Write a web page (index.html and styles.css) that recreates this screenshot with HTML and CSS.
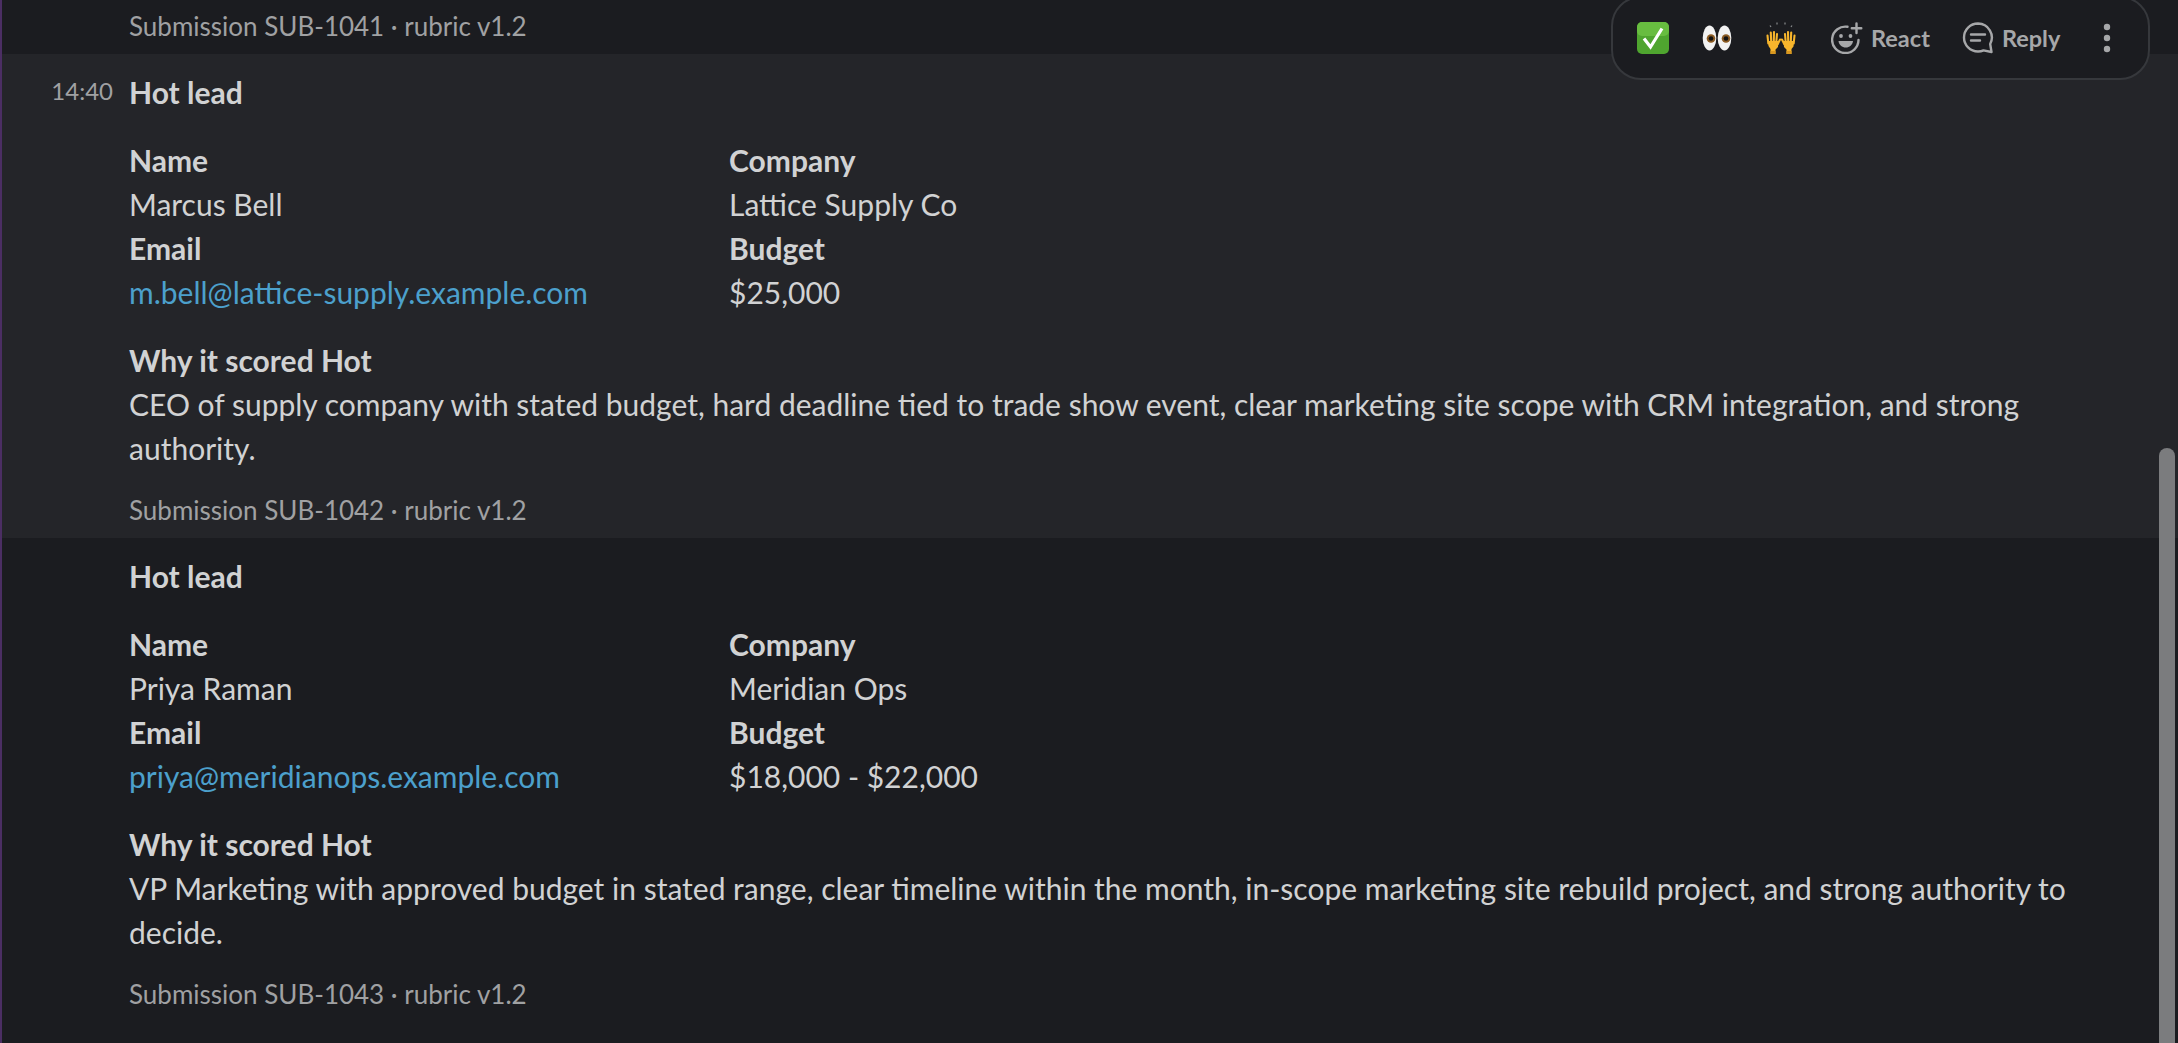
FILE: index.html
```html
<!DOCTYPE html>
<html lang="en">
<head>
  <meta charset="UTF-8">
  <title>Hot leads</title>
  <link rel="stylesheet" href="styles.css">
</head>
<body>
  <main class="channel">
    <p class="meta meta-top">Submission SUB-1041 · rubric v1.2</p>

    <article class="message hovered">
      <time class="stamp">14:40</time>
      <h3 class="title">Hot lead</h3>
      <div class="fields">
        <div><b>Name</b><span>Marcus Bell</span></div>
        <div><b>Company</b><span>Lattice Supply Co</span></div>
        <div><b>Email</b><a href="#">m.bell@lattice-supply.example.com</a></div>
        <div><b>Budget</b><span>$25,000</span></div>
      </div>
      <div class="why">
        <b>Why it scored Hot</b>
        <p>CEO of supply company with stated budget, hard deadline tied to trade show event, clear marketing site scope with CRM integration, and strong authority.</p>
      </div>
      <p class="meta">Submission SUB-1042 · rubric v1.2</p>
    </article>

    <article class="message">
      <h3 class="title">Hot lead</h3>
      <div class="fields">
        <div><b>Name</b><span>Priya Raman</span></div>
        <div><b>Company</b><span>Meridian Ops</span></div>
        <div><b>Email</b><a href="#">priya@meridianops.example.com</a></div>
        <div><b>Budget</b><span>$18,000 - $22,000</span></div>
      </div>
      <div class="why">
        <b>Why it scored Hot</b>
        <p>VP Marketing with approved budget in stated range, clear timeline within the month, in-scope marketing site rebuild project, and strong authority to decide.</p>
      </div>
      <p class="meta">Submission SUB-1043 · rubric v1.2</p>
    </article>
  </main>

  <div class="toolbar">
    <svg class="emoji" viewBox="0 0 32 32">
      <rect width="32" height="32" rx="5" fill="#4fa52f"/>
      <rect width="32" height="14" rx="5" fill="#68bd40"/>
      <path d="M7 16.500l6.500 8.500L25 6.500" fill="none" stroke="#fff" stroke-width="3.200"/>
    </svg>
    <svg class="emoji" viewBox="0 0 32 32">
      <ellipse cx="8.500" cy="16" rx="6.800" ry="12.500" fill="#f2f2f2"/>
      <ellipse cx="23.500" cy="16" rx="6.800" ry="12.500" fill="#f2f2f2"/>
      <circle cx="10" cy="16.500" r="4.300" fill="#8a5a22"/>
      <circle cx="25" cy="16.500" r="4.300" fill="#8a5a22"/>
      <circle cx="10" cy="16.500" r="2.300" fill="#111"/>
      <circle cx="25" cy="16.500" r="2.300" fill="#111"/>
    </svg>
    <svg class="emoji" viewBox="0 0 32 32">
      <g stroke="#f7b52c" stroke-width="2.100" stroke-linecap="round">
        <path d="M2.500 13.500l.8 8M5.800 10.500l.4 9M9 10l-.2 9M12 12l-.7 8M15 17.500l-2.200 4.500"/>
        <path d="M29.500 13.500l-.8 8M26.200 10.500l-.4 9M23 10l.2 9M20 12l.7 8M17 17.500l2.200 4.500"/>
      </g>
      <path d="M3 19h10.500l-.5 6-2.500 2.500v4.500H5.500v-5L3.500 24z" fill="#f7b52c"/>
      <path d="M29 19H18.500l.5 6 2.500 2.500v4.500h5v-5l2-2.500z" fill="#f7b52c"/>
      <path d="M5.500 29h5v3h-5zM21.500 29h5v3h-5z" fill="#d9971f"/>
      <path d="M5 3.500l1 1.500M12 .5v2M20 .5v2M27 3.500l-1 1.500" stroke="#8a8c8e" stroke-width="1.200" fill="none"/>
    </svg>
    <button class="action react">
      <svg viewBox="0 0 32 32" fill="none" stroke="currentColor" stroke-width="2.400" stroke-linecap="round">
        <path d="M16.500 4.800A13.200 13.200 0 1 0 27.500 18"/>
        <path d="M25.500 1.500v9.500M20.800 6.200h9.500"/>
        <circle cx="10" cy="14" r="1.900" fill="currentColor" stroke="none"/>
        <circle cx="19.500" cy="14" r="1.900" fill="currentColor" stroke="none"/>
        <path d="M7.500 19h14.500c-.5 4-3.500 6.500-7.250 6.500S8 23 7.500 19z" fill="currentColor" stroke="none"/>
      </svg>
      React
    </button>
    <button class="action reply">
      <svg viewBox="0 0 32 32" fill="none" stroke="currentColor" stroke-width="2.400" stroke-linecap="round" stroke-linejoin="round">
        <path d="M16 1.500a14 14 0 1 0 0 28c2 0 4-.4 5.500-1.100l8 1.600-1.300-8A14 14 0 0 0 16 1.500z"/>
        <path d="M9 12.500h14M9 18.500h9"/>
      </svg>
      Reply
    </button>
    <svg class="more" viewBox="0 0 8 32" fill="#a6a7a9">
      <circle cx="4" cy="5" r="3.200"/>
      <circle cx="4" cy="16" r="3.200"/>
      <circle cx="4" cy="27" r="3.200"/>
    </svg>
  </div>

  <div class="scroll-thumb"></div>
</body>
</html>
```

FILE: styles.css
```css
* { margin: 0; padding: 0; box-sizing: border-box; }

html, body { height: 100%; overflow: hidden; }

body {
  background: #1b1c20;
  color: #d1d2d3;
  font-family: Lato, "Noto Sans", sans-serif;
  font-size: 30px;
  line-height: 44px;
  position: relative;
}

.channel {
  height: 100%;
  border-left: 2px solid #4b2e63;
}

.meta {
  font-size: 26px;
  line-height: 36px;
  color: #a0a1a3;
}

.meta-top {
  height: 54px;
  padding: 8px 0 0 127px;
}

.message {
  position: relative;
  padding: 16px 0 10px 127px;
}

.message.hovered { background: #242529; }

.stamp {
  position: absolute;
  left: 0;
  width: 111px;
  top: 19px;
  text-align: right;
  font-size: 24px;
  line-height: 36px;
  color: #a0a1a3;
}

.title { font-size: 30px; line-height: 44px; font-weight: 700; }

b { font-weight: 700; display: block; }

.fields {
  display: grid;
  grid-template-columns: 600px 1fr;
  margin-top: 24px;
}

.fields span, .fields a { display: block; }

a { color: #4ca0cc; text-decoration: none; }

.why {
  margin-top: 24px;
  margin-bottom: 22px;
  padding-right: 60px;
}

.toolbar {
  position: absolute;
  top: -4px;
  left: 1611px;
  width: 539px;
  height: 84px;
  display: flex;
  align-items: center;
  padding: 0 0 0 24px;
  background: #1b1c20;
  border: 2px solid #36383c;
  border-radius: 30px;
  color: #a6a7a9;
}

.emoji { width: 32px; height: 32px; flex: none; margin-right: 32px; }

.action {
  display: flex;
  align-items: center;
  gap: 8px;
  background: none;
  border: 0;
  color: inherit;
  font: 700 23.500px/36px Lato, sans-serif;
}

.action svg { width: 32px; height: 32px; }

.react { margin: 0 33px 0 2px; }

.reply svg { margin-left: -1px; }

.more { width: 8px; height: 32px; margin-left: 43px; }

.scroll-thumb {
  position: absolute;
  top: 448px;
  right: 3px;
  bottom: 0;
  width: 16px;
  border-radius: 8px 8px 0 0;
  background: #7b7c7e;
}
```
